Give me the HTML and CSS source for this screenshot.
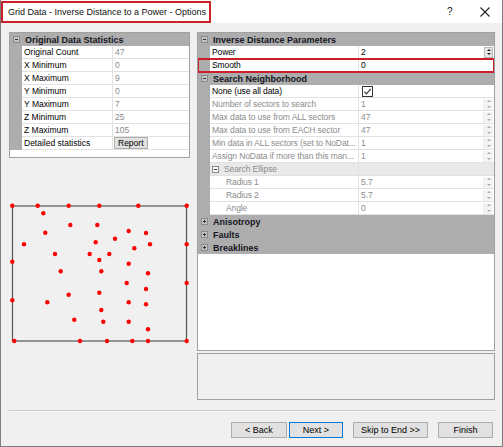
FILE: index.html
```html
<!DOCTYPE html>
<html lang="en">

<head>
	<title>Grid Data - Inverse Distance to a Power - Options</title>
	<meta charset="utf-8"/>
	<link rel="stylesheet" href="styles.css">
</head>

<body>
<div class="dialog">
	<div class="titlebar">
		<span class="title">Grid Data - Inverse Distance to a Power - Options</span>
		<span class="help">?</span>
		<svg class="close" width="10" height="10" viewBox="0 0 10 10">
			<path d="M0.5 0.5 L9.5 9.5 M9.5 0.5 L0.5 9.5" stroke="#222" stroke-width="1.1" fill="none"/>
		</svg>
	</div>

	<div class="content">
		<div class="main">
			<div class="left">
				<div class="pgrid stats">
					<div class="cat"><span class="gut"><i class="tog"></i></span>Original Data Statistics</div>
					<div class="row"><span class="gut"></span><span class="name">Original Count</span><span class="val ro">47</span></div>
					<div class="row"><span class="gut"></span><span class="name">X Minimum</span><span class="val ro">0</span></div>
					<div class="row"><span class="gut"></span><span class="name">X Maximum</span><span class="val ro">9</span></div>
					<div class="row"><span class="gut"></span><span class="name">Y Minimum</span><span class="val ro">0</span></div>
					<div class="row"><span class="gut"></span><span class="name">Y Maximum</span><span class="val ro">7</span></div>
					<div class="row"><span class="gut"></span><span class="name">Z Minimum</span><span class="val ro">25</span></div>
					<div class="row"><span class="gut"></span><span class="name">Z Maximum</span><span class="val ro">105</span></div>
					<div class="row"><span class="gut"></span><span class="name">Detailed statistics</span><span class="val"><span class="report">Report</span></span></div>
				</div>

				<svg class="plot" width="181" height="150" viewBox="9 199 181 150">
					<rect x="12.5" y="206" width="174" height="135" fill="none" stroke="#555" stroke-width="1.2"/>
					<g fill="#f00">
						<circle cx="12.3" cy="205.7" r="2.2"/><circle cx="37.7" cy="205.7" r="2.2"/>
						<circle cx="68.7" cy="205.7" r="2.2"/><circle cx="99.3" cy="205.7" r="2.2"/>
						<circle cx="138.3" cy="205.7" r="2.2"/><circle cx="186.7" cy="205.7" r="2.2"/>
						<circle cx="43.3" cy="213.3" r="2.2"/><circle cx="70.3" cy="225" r="2.2"/>
						<circle cx="97.3" cy="225" r="2.2"/><circle cx="128.7" cy="231" r="2.2"/>
						<circle cx="146" cy="233" r="2.2"/><circle cx="45.3" cy="232.7" r="2.2"/>
						<circle cx="115" cy="238.7" r="2.2"/><circle cx="24" cy="244.3" r="2.2"/>
						<circle cx="95.7" cy="242.3" r="2.2"/><circle cx="150" cy="244.3" r="2.2"/>
						<circle cx="186.7" cy="244.3" r="2.2"/><circle cx="134.3" cy="248.3" r="2.2"/>
						<circle cx="55" cy="254" r="2.2"/><circle cx="89.7" cy="254" r="2.2"/>
						<circle cx="109.3" cy="254" r="2.2"/><circle cx="99.3" cy="260" r="2.2"/>
						<circle cx="12.3" cy="261.7" r="2.2"/><circle cx="128.7" cy="263.7" r="2.2"/>
						<circle cx="60.7" cy="271.3" r="2.2"/><circle cx="101.3" cy="271.3" r="2.2"/>
						<circle cx="148" cy="273.3" r="2.2"/><circle cx="126.7" cy="283" r="2.2"/>
						<circle cx="186.7" cy="283" r="2.2"/><circle cx="146" cy="289" r="2.2"/>
						<circle cx="99.3" cy="292.7" r="2.2"/><circle cx="68.7" cy="294.7" r="2.2"/>
						<circle cx="12.3" cy="300.3" r="2.2"/><circle cx="47.3" cy="302.3" r="2.2"/>
						<circle cx="128.7" cy="302.3" r="2.2"/><circle cx="146" cy="304.3" r="2.2"/>
						<circle cx="101.3" cy="310" r="2.2"/><circle cx="74.3" cy="319.7" r="2.2"/>
						<circle cx="103.3" cy="321.7" r="2.2"/><circle cx="128.7" cy="321.7" r="2.2"/>
						<circle cx="148" cy="329.3" r="2.2"/><circle cx="14.3" cy="341" r="2.2"/>
						<circle cx="80" cy="341" r="2.2"/><circle cx="107" cy="341" r="2.2"/>
						<circle cx="132.3" cy="341" r="2.2"/><circle cx="148" cy="341" r="2.2"/>
						<circle cx="186.7" cy="341" r="2.2"/>
					</g>
				</svg>
			</div>

			<div class="right">
				<div class="pgrid params">
					<div class="cat"><span class="gut"><i class="tog"></i></span>Inverse Distance Parameters</div>
					<div class="row"><span class="gut"></span><span class="name">Power</span><span class="val">2<span class="spin on"><b class="up"></b><b class="dn"></b></span></span></div>
					<div class="row marked"><span class="gut"></span><span class="name">Smooth</span><span class="val">0</span></div>
					<div class="cat"><span class="gut"><i class="tog"></i></span>Search Neighborhood</div>
					<div class="row"><span class="gut"></span><span class="name">None (use all data)</span><span class="val">
						<svg class="check" width="11" height="11" viewBox="0 0 11 11">
							<rect x="0.5" y="0.5" width="10" height="10" fill="#fff" stroke="#333"/>
							<path d="M2.3 5.6 L4.5 7.9 L8.8 2.8" stroke="#333" stroke-width="1.1" fill="none"/>
						</svg>
					</span></div>
					<div class="row off"><span class="gut"></span><span class="name">Number of sectors to search</span><span class="val">1<span class="spin"><b class="up"></b><b class="dn"></b></span></span></div>
					<div class="row off"><span class="gut"></span><span class="name">Max data to use from ALL sectors</span><span class="val">47<span class="spin"><b class="up"></b><b class="dn"></b></span></span></div>
					<div class="row off"><span class="gut"></span><span class="name">Max data to use from EACH sector</span><span class="val">47<span class="spin"><b class="up"></b><b class="dn"></b></span></span></div>
					<div class="row off"><span class="gut"></span><span class="name">Min data in ALL sectors (set to NoDat...</span><span class="val">1<span class="spin"><b class="up"></b><b class="dn"></b></span></span></div>
					<div class="row off"><span class="gut"></span><span class="name">Assign NoData if more than this man...</span><span class="val">1<span class="spin"><b class="up"></b><b class="dn"></b></span></span></div>
					<div class="row off sub-head"><span class="gut"></span><span class="name"><i class="tog light"></i>Search Ellipse</span><span class="val"></span></div>
					<div class="row off sub"><span class="gut"></span><span class="name">Radius 1</span><span class="val">5.7<span class="spin"><b class="up"></b><b class="dn"></b></span></span></div>
					<div class="row off sub"><span class="gut"></span><span class="name">Radius 2</span><span class="val">5.7<span class="spin"><b class="up"></b><b class="dn"></b></span></span></div>
					<div class="row off sub"><span class="gut"></span><span class="name">Angle</span><span class="val">0<span class="spin"><b class="up"></b><b class="dn"></b></span></span></div>
					<div class="cat"><span class="gut"><i class="tog plus"></i></span>Anisotropy</div>
					<div class="cat"><span class="gut"><i class="tog plus"></i></span>Faults</div>
					<div class="cat"><span class="gut"><i class="tog plus"></i></span>Breaklines</div>
				</div>
				<div class="desc"></div>
			</div>
		</div>

		<div class="sep"></div>

		<div class="buttons">
			<span class="btn back">&lt; Back</span>
			<span class="btn next">Next &gt;</span>
			<span class="btn skip">Skip to End &gt;&gt;</span>
			<span class="btn finish">Finish</span>
		</div>
	</div>
</div>
</body>
</html>
```

FILE: styles.css
```css
body {
	margin: 0;
	font-family: "Liberation Sans", Arial, sans-serif;
	color: #000;
	background: #fff;
}

.dialog {
	width: 503px;
	height: 447px;
	box-sizing: border-box;
	border: 1px solid #7d7d7d;
	border-top: none;
	background: #f0f0f0;
	display: flex;
	flex-direction: column;
}

/* title bar */
.titlebar {
	height: 23px;
	background: #fff;
	display: flex;
	align-items: flex-start;
}

.title {
	box-sizing: border-box;
	width: 210px;
	height: 22px;
	margin-top: 1px;
	border: 2px solid #cc1f2a;
	padding-left: 5px;
	font-size: 9px;
	line-height: 18px;
	color: #111;
	white-space: nowrap;
}

.help {
	margin-left: 236px;
	margin-top: 6px;
	font-size: 10px;
	color: #222;
}

.close {
	margin-left: 27px;
	margin-top: 7px;
}

/* body */
.content {
	flex: 1;
	padding: 9px 7px 0 8px;
	display: flex;
	flex-direction: column;
}

.main {
	display: flex;
	gap: 7px;
	height: 368px;
}

.left {
	width: 181px;
	display: flex;
	flex-direction: column;
}

.right {
	width: 298px;
	display: flex;
	flex-direction: column;
	gap: 2px;
}

.plot {
	margin-top: 41px;
	display: block;
}

/* property grids */
.pgrid {
	box-sizing: border-box;
	border: 1px solid #a0a0a0;
	background: #fff;
	font-size: 8.5px;
	overflow: hidden;
}

.stats { height: 126px; }
.params { height: 319px; }

.cat {
	display: flex;
	align-items: center;
	height: 13px;
	background: #adadad;
	font-weight: bold;
	font-size: 9px;
	color: #141422;
}

.cat .gut { margin-right: 3px; }

.gut {
	width: 12px;
	height: 13px;
	flex: none;
	background: #adadad;
	display: flex;
	align-items: center;
	justify-content: center;
}

.row {
	display: flex;
	height: 13px;
}

.name, .val {
	box-sizing: border-box;
	height: 13px;
	line-height: 12px;
	border-bottom: 1px solid #e1e1e1;
	padding-left: 2px;
	white-space: nowrap;
	overflow: hidden;
}

.name {
	flex: none;
	border-right: 1px solid #e1e1e1;
}

.val {
	flex: 1;
	display: flex;
	align-items: center;
}

.stats .name { width: 91px; }

.params .name {
	width: 149px;
	letter-spacing: -0.1px;
}

.ro { color: #8c8c8c; }

.off { color: #8c8c8c; }

.sub .name { padding-left: 16px; }

.sub-head .name, .sub-head .val {
	background: #e9e9e9;
}

.sub-head .name {
	display: flex;
	align-items: center;
	gap: 5px;
}

.marked {
	outline: 2px solid #cc1f2a;
	outline-offset: -1px;
}

/* expand / collapse boxes */
.tog {
	position: relative;
	box-sizing: border-box;
	width: 7px;
	height: 7px;
	border: 1px solid #8a8a8a;
	background: #c4c4c4;
}

.tog.light {
	background: #fff;
	border-color: #888;
}

.tog::before {
	content: "";
	position: absolute;
	left: 1px;
	top: 2px;
	width: 3px;
	height: 1px;
	background: #333;
}

.tog.plus::after {
	content: "";
	position: absolute;
	left: 2px;
	top: 1px;
	width: 1px;
	height: 3px;
	background: #333;
}

.report {
	box-sizing: border-box;
	height: 12px;
	margin-left: -1px;
	padding: 0 3px;
	line-height: 10px;
	border: 1px solid #adadad;
	background: #e1e1e1;
	color: #000;
}

/* spinners */
.spin {
	margin-left: auto;
	margin-right: 1px;
	width: 9px;
	height: 11px;
	display: flex;
	flex-direction: column;
	align-items: center;
	justify-content: space-around;
	background: #f4f4f4;
	border-left: 1px solid #eee;
}

.spin b {
	width: 0;
	height: 0;
	border-left: 2px solid transparent;
	border-right: 2px solid transparent;
}

.spin .up { border-bottom: 2px solid #aaa; }
.spin .dn { border-top: 2px solid #aaa; }

.spin.on {
	background: #e6e6e6;
	border: 1px solid #b8b8b8;
	box-sizing: border-box;
}

.spin.on .up { border-bottom-color: #222; }
.spin.on .dn { border-top-color: #222; }

.check { margin-left: 1px; }

.desc {
	box-sizing: border-box;
	height: 47px;
	border: 1px solid #a0a0a0;
	background: #f0f0f0;
}

.sep {
	margin-top: 10px;
	height: 1px;
	background: #c9c9c9;
	border-bottom: 1px solid #fafafa;
}

/* buttons */
.buttons {
	display: flex;
	justify-content: flex-end;
	margin-top: 10px;
	margin-right: 2px;
	gap: 2px;
}

.btn {
	box-sizing: border-box;
	height: 16px;
	border: 1px solid #adadad;
	background: #e1e1e1;
	font-size: 9px;
	line-height: 14px;
	text-align: center;
}

.back { width: 56px; }
.next { width: 54px; border-color: #0078d7; margin-right: 8px; }
.skip { width: 75px; margin-right: 8px; }
.finish { width: 55px; }
```
